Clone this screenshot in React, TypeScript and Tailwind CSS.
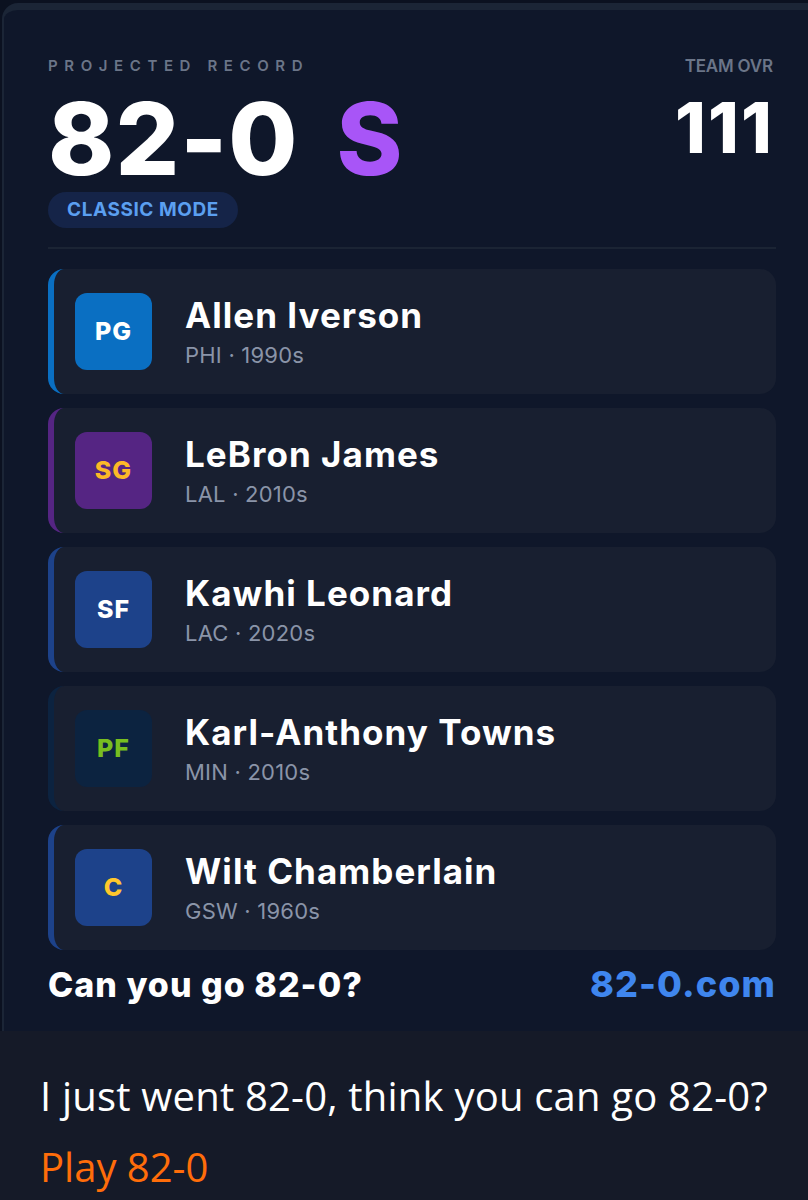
import React from 'react';

type Player = {
    pos: string;
    name: string;
    team: string;
    era: string;
    bar: string;
    badge: string;
    text: string;
};

const players: Player[] = [
    { pos: 'PG', name: 'Allen Iverson', team: 'PHI', era: '1990s', bar: 'border-[#0a6fc2]', badge: 'bg-[#0a6fc2]', text: 'text-white' },
    { pos: 'SG', name: 'LeBron James', team: 'LAL', era: '2010s', bar: 'border-[#552583]', badge: 'bg-[#552583]', text: 'text-[#fdb927]' },
    { pos: 'SF', name: 'Kawhi Leonard', team: 'LAC', era: '2020s', bar: 'border-[#1d428a]', badge: 'bg-[#1d428a]', text: 'text-white' },
    { pos: 'PF', name: 'Karl-Anthony Towns', team: 'MIN', era: '2010s', bar: 'border-[#0c2340]', badge: 'bg-[#0c2340]', text: 'text-[#78be20]' },
    { pos: 'C', name: 'Wilt Chamberlain', team: 'GSW', era: '1960s', bar: 'border-[#1d428a]', badge: 'bg-[#1d428a]', text: 'text-[#ffc72c]' },
];

const PlayerRow = ({ p }: { p: Player }) => (
    <div className={`flex items-center h-[125px] rounded-2xl border-l-[6px] ${p.bar} bg-[#181f30] pl-[21px]`}>
        <div className={`w-[77px] h-[77px] rounded-xl ${p.badge} flex items-center justify-center`}>
            <span className={`text-[25px] font-extrabold tracking-[0.04em] ${p.text}`}>{p.pos}</span>
        </div>
        <div className="ml-[33px]">
            <div className="text-[35px] leading-[40px] font-bold text-white tracking-[0.03em]">{p.name}</div>
            <div className="text-[22px] leading-[28px] mt-[6px] tracking-[0.01em] text-[#8a94a8]">
                {p.team} · {p.era}
            </div>
        </div>
    </div>
);

const App = () => {
    return (
        <div className="w-[808px] h-[1200px] overflow-hidden bg-[#151a28] font-['Inter','Liberation_Sans',sans-serif]">
            <div className="bg-[#0b1120] pt-[3px]">
                <div className="ml-[2px] w-[830px] rounded-tl-2xl border-t-[7px] border-l-[2px] border-[#1b2536] bg-[#0f172a] pl-[44px] pr-[56px] pb-[25px]">
                    <div className="flex justify-between pt-[48px]">
                        <div>
                            <div className="text-[15px] leading-[16px] font-semibold tracking-[0.44em] text-[#6b7588]">
                                PROJECTED RECORD
                            </div>
                            <div className="mt-[15px] flex text-[100px] leading-[100px] font-extrabold tracking-[0.01em] text-white">
                                <span>82-0</span>
                                <span className="ml-[38px] text-[#a855f7]">S</span>
                            </div>
                            <div className="mt-[3px] inline-flex h-[36px] items-center rounded-full bg-[#152448] px-[19px] text-[19px] font-bold tracking-[0.03em] text-[#5b9ff0]">
                                CLASSIC MODE
                            </div>
                        </div>
                        <div className="flex flex-col items-end">
                            <div className="text-[17px] leading-[16px] font-semibold tracking-[-0.01em] text-[#6b7588] mr-[3px]">TEAM OVR</div>
                            <div className="mt-[19px] text-[70px] leading-[70px] font-extrabold tracking-[0.03em] text-white mr-[2px]">111</div>
                        </div>
                    </div>
                    <div className="mt-[19px] h-[2px] bg-[#1b2434]" />
                    <div className="mt-[20px] flex flex-col gap-[14px]">
                        {players.map((p) => (
                            <PlayerRow key={p.pos} p={p} />
                        ))}
                    </div>
                    <div className="mt-[12px] flex h-[44px] items-center justify-between">
                        <div className="text-[34px] font-extrabold tracking-[0.03em] text-white">Can you go 82-0?</div>
                        <div className="text-[36px] font-extrabold tracking-[0.03em] text-[#3f86ee]">82-0.com</div>
                    </div>
                </div>
            </div>
            <div className="px-[40px] pt-[39px] font-['Open_Sans','Noto_Sans',sans-serif]">
                <div className="text-[40px] leading-[52px] tracking-[0.005em] text-white whitespace-nowrap">
                    I just went 82-0, think you can go 82-0?
                </div>
                <div className="mt-[19px] text-[40px] leading-[52px] text-[#ff6d0a]">Play 82-0</div>
            </div>
        </div>
    );
};

export default App;
